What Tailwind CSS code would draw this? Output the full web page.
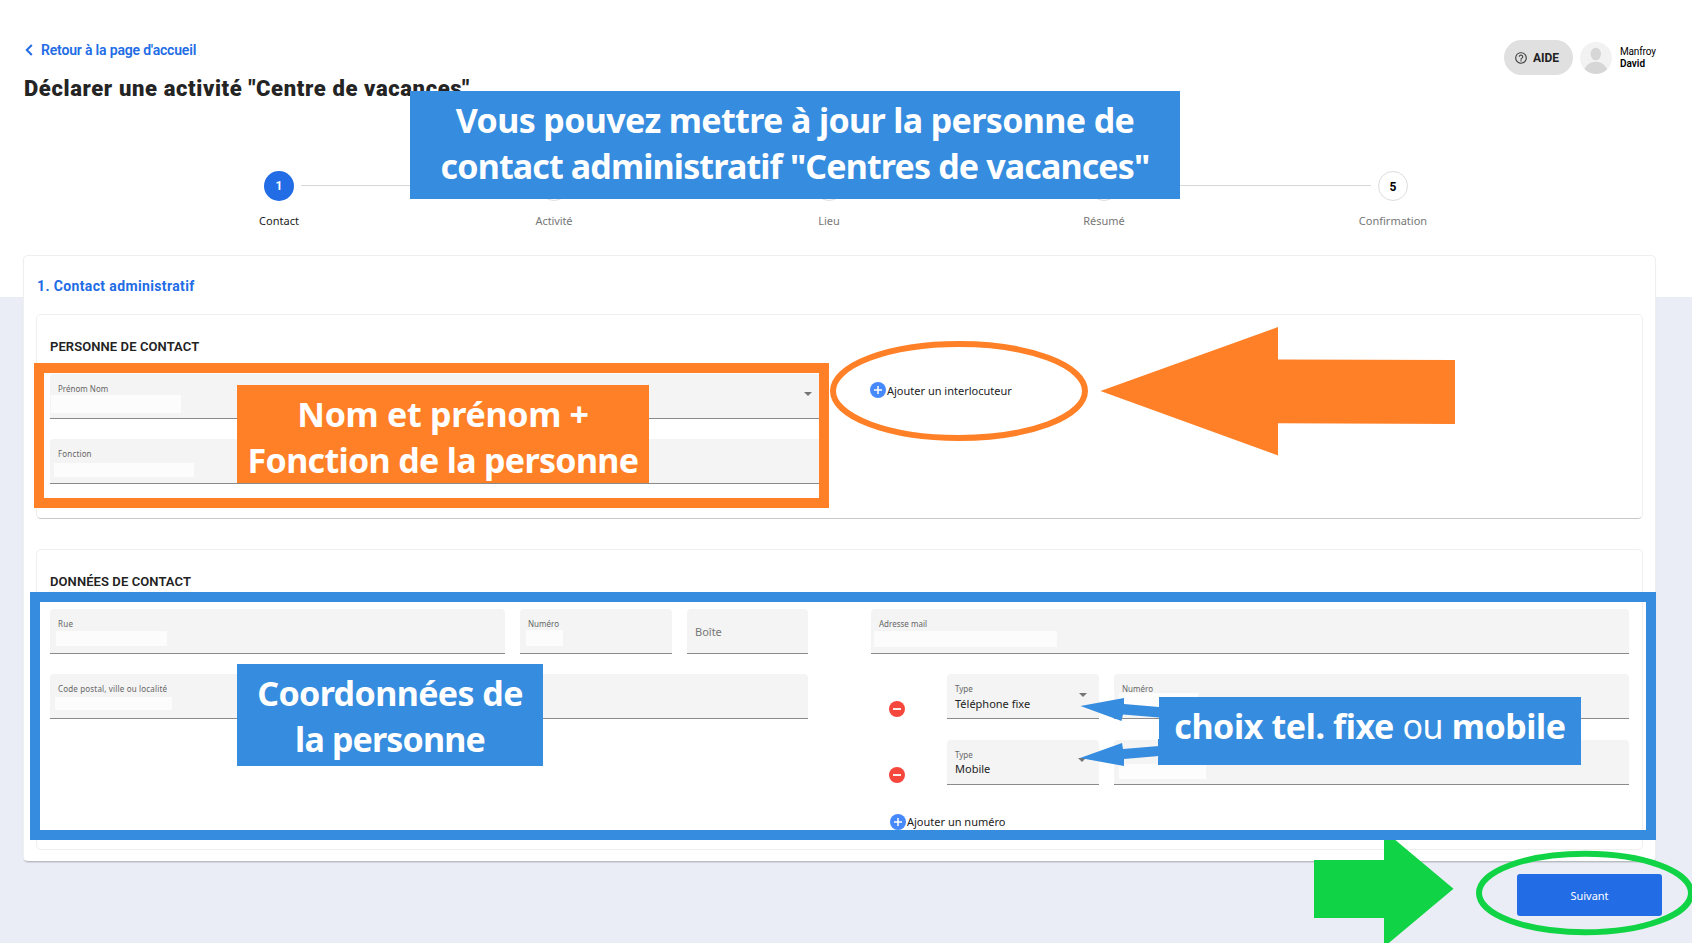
<!DOCTYPE html>
<html lang="fr">
<head>
<meta charset="utf-8">
<title>Centre de vacances</title>
<script src="https://cdn.jsdelivr.net/npm/@tailwindcss/browser@4"></script>
</head>
<body class="font-['Noto_Sans',sans-serif] text-[#222]">
<div class="relative w-[1692px] h-[943px] overflow-hidden bg-[linear-gradient(#fff_297px,#eaedf6_297px)]">

  <header class="flex justify-between h-[171px] pl-6 pr-[36px] font-['Roboto',sans-serif]">
    <div class="pt-10">
      <a class="flex items-center h-5 text-[#226ce5] text-[14px] leading-5 font-semibold whitespace-nowrap tracking-[-0.18px]">
        <svg class="w-[8px] h-[12px] ml-px mr-[8px]" viewBox="0 0 8 12" fill="none" stroke="#226ce5" stroke-width="2"><path d="M6.8 1 1.8 6l5 5"/></svg>
        <span>Retour à la page d'accueil</span>
      </a>
      <h1 class="mt-[15px] text-[22px] leading-7 font-black text-[#242424] whitespace-nowrap tracking-[0.62px]">Déclarer une activité "Centre de vacances"</h1>
    </div>
    <div class="flex pt-10">
      <div class="flex items-center w-[69px] h-[35px] rounded-full bg-[#e0e0e0] pl-[10px]">
        <svg class="w-[14px] h-[14px] mr-[5px]" viewBox="0 0 24 24" fill="#444"><path d="M11 18h2v-2h-2v2zm1-16C6.48 2 2 6.48 2 12s4.480 10 10 10 10-4.480 10-10S17.520 2 12 2zm0 18c-4.410 0-8-3.590-8-8s3.590-8 8-8 8 3.590 8 8-3.590 8-8 8zm0-14c-2.210 0-4 1.790-4 4h2c0-1.100.9-2 2-2s2 .9 2 2c0 2-3 1.750-3 5h2c0-2.250 3-2.500 3-5 0-2.210-1.790-4-4-4z"/></svg>
        <span class="text-[12px] leading-4 font-bold">AIDE</span>
      </div>
      <svg class="w-8 h-8 mt-[2px] ml-[7px]" viewBox="0 0 32 32"><clipPath id="a"><circle cx="16" cy="16" r="16"/></clipPath><g clip-path="url(#a)"><rect width="32" height="32" fill="#f2f2f2"/><ellipse cx="15.800" cy="12" rx="5.200" ry="6.300" fill="#d6d6d6"/><path d="M4 28c2.500-5.500 6.500-8.300 11.800-8.300S25 22.500 27.500 28c-3 2.700-7 4-11.500 4s-9-1.300-12-4z" fill="#d6d6d6"/></g></svg>
      <div class="ml-2 mt-[6px] w-[36px] text-[10px] leading-3 text-black whitespace-nowrap">
        <div class="tracking-[-0.15px]">Manfroy</div>
        <div class="font-semibold">David</div>
      </div>
    </div>
  </header>

  <div class="flex ml-[239px] h-[84px] text-[11px] leading-4 text-[#777]">
    <div class="flex flex-col items-center w-20"><div class="w-[30px] h-[30px] rounded-full bg-[#226ce5] text-white font-['Roboto',sans-serif] font-bold text-[12px] leading-[31px] text-center">1</div><span class="mt-3 text-[#222]">Contact</span></div>
    <div class="w-[231px] -mx-[18px] mt-[14px] h-px bg-[#d6d8d8]"></div>
    <div class="flex flex-col items-center w-20"><div class="w-[30px] h-[30px] rounded-full border border-[#ddd]"></div><span class="mt-3 tracking-[-0.1px]">Activité</span></div>
    <div class="w-[231px] -mx-[18px] mt-[14px] h-px bg-[#d6d8d8]"></div>
    <div class="flex flex-col items-center w-20"><div class="w-[30px] h-[30px] rounded-full border border-[#ddd]"></div><span class="mt-3">Lieu</span></div>
    <div class="w-[231px] -mx-[18px] mt-[14px] h-px bg-[#d6d8d8]"></div>
    <div class="flex flex-col items-center w-20"><div class="w-[30px] h-[30px] rounded-full border border-[#ddd]"></div><span class="mt-3">Résumé</span></div>
    <div class="w-[245px] -mx-[18px] mt-[14px] h-px bg-[#d6d8d8]"></div>
    <div class="flex flex-col items-center w-20"><div class="w-[30px] h-[30px] rounded-full border border-[#ddd] text-black font-['Roboto',sans-serif] font-bold text-[12px] leading-[30px] text-center">5</div><span class="mt-3">Confirmation</span></div>
  </div>

  <main class="ml-[23px] w-[1633px] h-[607px] rounded-[5px] border border-[#efefef] border-b-[#b8bcc0] bg-white px-3 pt-5 shadow-[0_1px_1px_rgba(0,0,0,0.1)]">
    <h2 class="h-5 pl-px text-[14px] leading-5 font-bold font-['Roboto',sans-serif] text-[#226ce5] tracking-[0.37px]">1. Contact administratif</h2>

    <section class="mt-[18px] w-[1607px] h-[205px] rounded-[5px] border border-[#efefef] border-b-[#c8c8c8] pl-[13px] pr-3 pt-[23px]">
      <h3 class="h-[18px] text-[13px] leading-[18px] font-semibold font-['Roboto',sans-serif] text-[#222] tracking-[0.09px]">PERSONNE DE CONTACT</h3>
      <div class="flex mt-[18px]">
        <div class="w-[772px] flex flex-col gap-5">
          <div class="flex justify-between h-[45px] rounded-t bg-[#f4f4f4] border-b border-[#8a8a8a]">
            <div class="pt-[9px]"><div class="pl-2 h-3 text-[8px] leading-3 text-[#666]">Prénom Nom</div><div class="ml-px w-[130px] h-[18px] bg-[#fcfcfc]"></div></div>
            <svg class="w-2 h-1 mt-[18px] mr-[10px]" viewBox="0 0 8 4"><path d="M0 0h8L4 4z" fill="#757575"/></svg>
          </div>
          <div class="h-[45px] pt-[9px] rounded-t bg-[#f4f4f4] border-b border-[#8a8a8a]"><div class="pl-2 h-3 text-[8px] leading-3 text-[#666] tracking-[0.15px]">Fonction</div><div class="ml-1 mt-[3px] w-[140px] h-[14px] bg-[#fcfcfc]"></div></div>
        </div>
        <div class="flex h-[17px] mt-2 ml-[47.5px] text-[11px] leading-4">
          <svg class="w-4 h-4 mr-[1.5px]" viewBox="0 0 16 16"><circle cx="8" cy="8" r="8" fill="#4789fb"/><path d="M8 4v8M4 8h8" stroke="#fff" stroke-width="1.500"/></svg>
          <span class="pt-px">Ajouter un interlocuteur</span>
        </div>
      </div>
    </section>

    <section class="mt-[30px] w-[1607px] h-[301px] rounded-[5px] border border-[#efefef] pl-[13px] pr-3 pt-[23px]">
      <h3 class="h-[18px] text-[13px] leading-[18px] font-semibold font-['Roboto',sans-serif] text-[#222] tracking-[0.09px]">DONNÉES DE CONTACT</h3>
      <div class="flex mt-[18px] gap-[63px]">
        <div class="w-[758px]">
          <div class="flex gap-[15px]">
            <div class="w-[455px] h-[45px] pt-[9px] rounded-t bg-[#f4f4f4] border-b border-[#8a8a8a]"><div class="pl-2 h-3 text-[8px] leading-3 text-[#666] tracking-[0.3px]">Rue</div><div class="ml-[6px] mt-px w-[111px] h-[15px] bg-[#fcfcfc]"></div></div>
            <div class="w-[152px] h-[45px] pt-[9px] rounded-t bg-[#f4f4f4] border-b border-[#8a8a8a]"><div class="pl-2 h-3 text-[8px] leading-3 text-[#666]">Numéro</div><div class="ml-[6px] w-[37px] h-[16px] bg-[#fcfcfc]"></div></div>
            <div class="w-[121px] h-[45px] pt-[15px] pl-2 rounded-t bg-[#f4f4f4] border-b border-[#8a8a8a] text-[11px] leading-4 text-[#777]">Boîte</div>
          </div>
          <div class="mt-5 h-[45px] pt-[9px] rounded-t bg-[#f4f4f4] border-b border-[#8a8a8a]"><div class="pl-2 h-3 text-[8px] leading-3 text-[#666] tracking-[0.17px]">Code postal, ville ou localité</div><div class="ml-[5px] mt-[2px] w-[117px] h-[13px] bg-[#fcfcfc]"></div></div>
        </div>
        <div class="w-[758px]">
          <div class="h-[45px] pt-[9px] rounded-t bg-[#f4f4f4] border-b border-[#8a8a8a]"><div class="pl-2 h-3 text-[8px] leading-3 text-[#666]">Adresse mail</div><div class="ml-[3px] mt-px w-[183px] h-[16px] bg-[#fcfcfc]"></div></div>
          <div class="flex mt-5">
            <svg class="w-4 h-4 mt-[27px] ml-[17.5px] mr-[42.5px]" viewBox="0 0 16 16"><circle cx="8" cy="8" r="8" fill="#f5473c"/><path d="M4 8h8" stroke="#fff" stroke-width="1.800"/></svg>
            <div class="flex justify-between w-[152px] h-[45px] rounded-t bg-[#f4f4f4] border-b border-[#8a8a8a]">
              <div class="pt-[9px] pl-2"><div class="h-3 text-[8px] leading-3 text-[#666]">Type</div><div class="pt-px text-[11px] leading-4">Téléphone fixe</div></div>
              <svg class="w-2 h-1 mt-[19px] mr-[12px]" viewBox="0 0 8 4"><path d="M0 0h8L4 4z" fill="#757575"/></svg>
            </div>
            <div class="ml-[15px] w-[515px] h-[45px] pt-[9px] rounded-t bg-[#f4f4f4] border-b border-[#8a8a8a]"><div class="pl-2 h-3 text-[8px] leading-3 text-[#666]">Numéro</div><div class="ml-[5px] -mt-[2px] w-[79px] h-[16px] bg-[#fdfdfd]"></div></div>
          </div>
          <div class="flex mt-[21px]">
            <svg class="w-4 h-4 mt-[26.5px] ml-[17.5px] mr-[42.5px]" viewBox="0 0 16 16"><circle cx="8" cy="8" r="8" fill="#f5473c"/><path d="M4 8h8" stroke="#fff" stroke-width="1.800"/></svg>
            <div class="flex justify-between w-[152px] h-[45px] rounded-t bg-[#f4f4f4] border-b border-[#8a8a8a]">
              <div class="pt-[9px] pl-2"><div class="h-3 text-[8px] leading-3 text-[#666]">Type</div><div class="text-[11px] leading-4">Mobile</div></div>
              <svg class="w-2 h-1 mt-[18px] mr-[13px]" viewBox="0 0 8 4"><path d="M0 0h8L4 4z" fill="#757575"/></svg>
            </div>
            <div class="ml-[15px] w-[515px] h-[45px] pt-[24px] rounded-t bg-[#f4f4f4] border-b border-[#8a8a8a]"><div class="ml-[5px] w-[87px] h-[15px] bg-[#fdfdfd]"></div></div>
          </div>
          <div class="flex h-4 mt-[29px] ml-[18.500px] text-[11px] leading-4">
            <svg class="w-4 h-4 mr-[1.5px]" viewBox="0 0 16 16"><circle cx="8" cy="8" r="8" fill="#4789fb"/><path d="M8 4v8M4 8h8" stroke="#fff" stroke-width="1.500"/></svg>
            <span>Ajouter un numéro</span>
          </div>
        </div>
      </div>
    </section>
  </main>

  <div class="flex justify-end mt-3 pr-[30px]">
    <button class="w-[145px] h-[42px] pt-[2px] rounded-[3px] bg-[#226ce5] text-white text-[11px] leading-4">Suivant</button>
  </div>

  <!-- annotations -->
  <svg class="absolute inset-0 w-[1692px] h-[943px]" viewBox="0 0 1692 943">
    <ellipse cx="959" cy="391" rx="126" ry="47" fill="none" stroke="#ff8027" stroke-width="6"/>
    <path d="M1100.500 391 1278 327v32.500l177 .5v64l-177-.7v32.200z" fill="#ff8027"/>
    <path d="M1314 860h70v-29.500l69.500 58.200L1384 947v-29h-70z" fill="#10d445"/>
    <ellipse cx="1585" cy="893" rx="106" ry="39.300" fill="none" stroke="#10d445" stroke-width="6"/>
    <path d="M1080.500 706 1124 698v6l35 3v10.500l-36-3-1.500 6.500zM1080 758l42-15 1 6 36-3v10l-35 3v7zM1158 739h1v26h-1z" fill="#368cde"/>
  </svg>
  <div class="absolute left-[34px] top-[363px] w-[795px] h-[145px] border-10 border-[#ff8027]"></div>
  <div class="absolute left-[30px] top-[592px] w-[1626px] h-[248px] border-10 border-[#368cde]"></div>
  <div class="absolute left-[410px] top-[91px] w-[770px] h-[108px] bg-[#368cde] pt-[6px] text-center text-white font-bold text-[34px] leading-[46px] whitespace-nowrap"><div class="tracking-[-0.63px]">Vous pouvez mettre à jour la personne de</div><div class="tracking-[-0.86px]">contact administratif "Centres de vacances"</div></div>
  <div class="absolute left-[237px] top-[385px] w-[412px] h-[98px] bg-[#ff8027] pt-[6px] text-center text-white font-bold text-[34px] leading-[46px] whitespace-nowrap"><div class="tracking-[-0.3px]">Nom et prénom +</div><div class="tracking-[-0.68px]">Fonction de la personne</div></div>
  <div class="absolute left-[237px] top-[664px] w-[306px] h-[102px] bg-[#368cde] pt-[6px] text-center text-white font-bold text-[34px] leading-[46px] whitespace-nowrap"><div class="tracking-[-0.6px]">Coordonnées de</div><div class="tracking-[-0.85px]">la personne</div></div>
  <div class="absolute left-[1159px] top-[697px] w-[422px] h-[68px] bg-[#368cde] pt-[6px] text-center text-white font-bold text-[34px] leading-[46px] whitespace-nowrap tracking-[-0.4px]">choix tel. fixe <span class="font-normal">ou</span> mobile</div>
</div>
</body>
</html>
